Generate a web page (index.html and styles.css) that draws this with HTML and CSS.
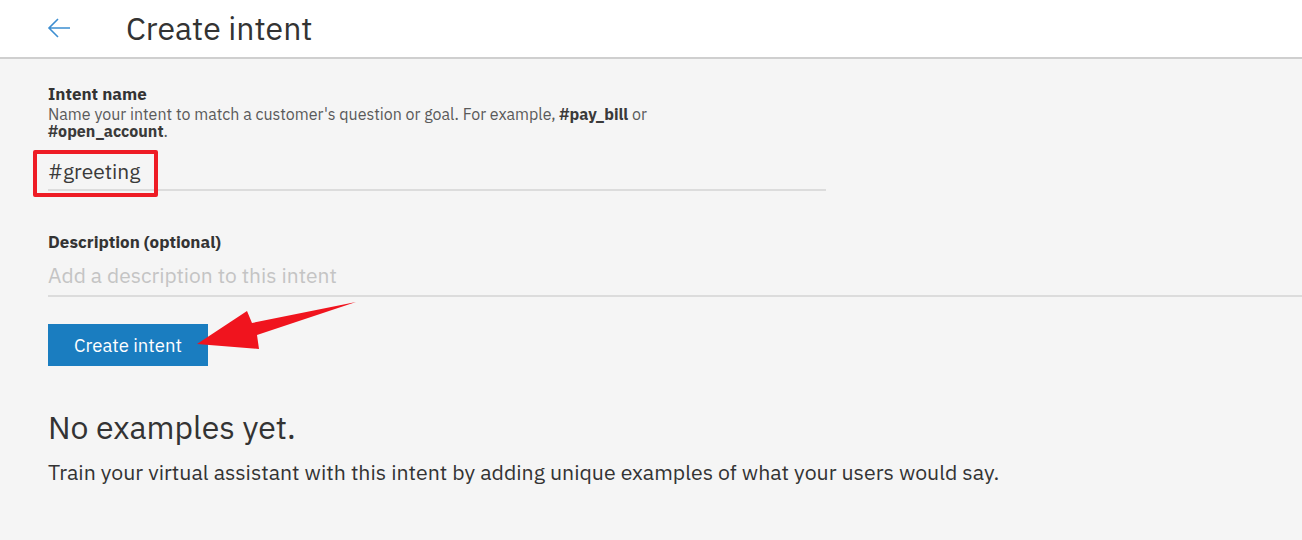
FILE: index.html
```html
<!DOCTYPE html>
<html>
<head>
<meta charset="utf-8">
<link rel="stylesheet" href="styles.css">
</head>
<body>
<header class="topbar">
  <svg class="back" width="24" height="22" viewBox="0 0 24 22"><path d="M23 11H2M11 2L2 11l9 9" fill="none" stroke="#3d8ed1" stroke-width="1.6"/></svg>
  <h1 class="title">Create intent</h1>
</header>
<main class="content">
  <section class="field name-field">
    <label class="label">Intent name</label>
    <p class="helper">Name your intent to match a customer's question or goal. For example, <b>#pay_bill</b> or<br><b>#open_account</b>.</p>
    <div class="input name-input"><span class="hl">#greeting</span></div>
  </section>
  <section class="field desc-field">
    <label class="label">Description (optional)</label>
    <div class="input desc-input placeholder">Add a description to this intent</div>
  </section>
  <button class="btn">Create intent</button>
  <h2 class="empty-title">No examples yet.</h2>
  <p class="empty-text">Train your virtual assistant with this intent by adding unique examples of what your users would say.</p>
  <svg class="annot-arrow" width="1302" height="540" viewBox="0 0 1302 540"><polygon points="197,344 247,311 252,323 356,302 257,335 259,349" fill="#f0141e"/></svg>
</main>
</body>
</html>
```
FILE: styles.css
```css
* { box-sizing: border-box; }
html, body { margin: 0; padding: 0; }
body {
  width: 1302px;
  height: 540px;
  overflow: hidden;
  background: #f5f5f5;
  font-family: "IBM Plex Sans", Roboto, "Liberation Sans", sans-serif;
  color: #333;
  position: relative;
}
.topbar {
  height: 59px;
  background: #fff;
  border-bottom: 2px solid #cfcfcf;
  display: flex;
  align-items: center;
  padding-left: 47px;
}
.back { margin-top: -2px; }
.title {
  margin: -1px 0 0 55px;
  font-size: 32px;
  font-weight: 400;
  color: #333;
}
.content {
  padding: 25px 0 0 48px;
}
.field { display: flex; flex-direction: column; }
.label {
  font-size: 17px;
  font-weight: 700;
  color: #333;
  line-height: 20px;
}
.helper {
  margin: 2px 0 0;
  font-size: 16px;
  line-height: 17px;
  color: #5a5a5a;
}
.helper b { color: #3a3a3a; }
.input {
  font-size: 21px;
  line-height: 28px;
  border-bottom: 2px solid #dcdcdc;
}
.name-input {
  width: 778px;
  margin-top: 11px;
  padding-top: 6px;
  padding-bottom: 4px;
}
.hl {
  display: inline-block;
  position: relative;
  color: #3a3a3a;
}
.hl::before {
  content: "";
  box-sizing: border-box;
  position: absolute;
  left: -15px;
  top: -7px;
  width: 125px;
  height: 47px;
  border: 4px solid #ee1c25;
  border-radius: 2px;
}
.desc-field { margin-top: 41px; }
.desc-input {
  margin-top: 8px;
  padding-top: 1px;
  padding-bottom: 6px;
  color: #c4c4c4;
}
.btn {
  display: block;
  margin-top: 27px;
  width: 160px;
  height: 42px;
  background: #1a7dc0;
  color: #fff;
  border: none;
  font-family: inherit;
  font-size: 18.5px;
  padding: 0;
}
.empty-title {
  margin: 41px 0 0;
  font-size: 32px;
  line-height: 40px;
  font-weight: 400;
  color: #333;
}
.empty-text {
  margin: 11px 0 0;
  font-size: 21.3px;
  line-height: 28px;
  color: #333;
}
.annot-arrow {
  position: absolute;
  left: 0;
  top: 0;
  pointer-events: none;
}
```
